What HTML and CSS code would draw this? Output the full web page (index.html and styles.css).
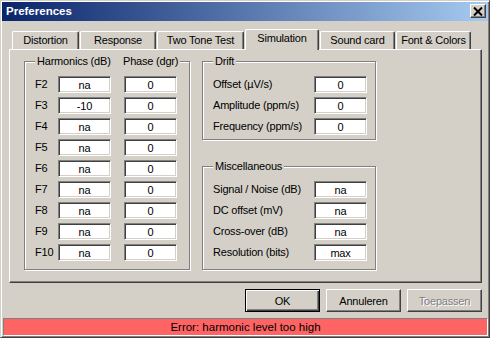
FILE: index.html
```html
<!DOCTYPE html>
<html lang="en">

<head>
    <meta charset="UTF-8">
    <title>Preferences</title>
    <link rel="stylesheet" href="styles.css">
</head>

<body>
    <div class="window">
        <div class="titlebar">
            <span class="title">Preferences</span>
            <button class="close-button" aria-label="Close">
                <svg width="10" height="9" viewBox="0 0 10 9">
                    <path d="M1 0.5 L9 8.5 M9 0.5 L1 8.5" stroke="#000" stroke-width="2" fill="none" />
                </svg>
            </button>
        </div>

        <div class="client">
            <div class="tabs">
                <div class="tab tab-distortion">Distortion</div>
                <div class="tab tab-response">Response</div>
                <div class="tab tab-twotone">Two Tone Test</div>
                <div class="tab tab-simulation active">Simulation</div>
                <div class="tab tab-soundcard">Sound card</div>
                <div class="tab tab-fonts">Font &amp; Colors</div>
            </div>

            <div class="panel">
                <fieldset class="group harmonics">
                    <legend><span class="legend-col">Harmonics (dB)</span><span class="legend-col-last">Phase (dgr)</span></legend>
                    <div class="harm-grid">
                        <span class="row-label">F2</span><input class="field" value="na"><input class="field" value="0">
                        <span class="row-label">F3</span><input class="field" value="-10"><input class="field" value="0">
                        <span class="row-label">F4</span><input class="field" value="na"><input class="field" value="0">
                        <span class="row-label">F5</span><input class="field" value="na"><input class="field" value="0">
                        <span class="row-label">F6</span><input class="field" value="na"><input class="field" value="0">
                        <span class="row-label">F7</span><input class="field" value="na"><input class="field" value="0">
                        <span class="row-label">F8</span><input class="field" value="na"><input class="field" value="0">
                        <span class="row-label">F9</span><input class="field" value="na"><input class="field" value="0">
                        <span class="row-label">F10</span><input class="field" value="na"><input class="field" value="0">
                    </div>
                </fieldset>

                <div class="side">
                    <fieldset class="group drift">
                        <legend>Drift</legend>
                        <div class="param-grid">
                            <span class="row-label">Offset (µV/s)</span><input class="field" value="0">
                            <span class="row-label">Amplitude (ppm/s)</span><input class="field" value="0">
                            <span class="row-label">Frequency (ppm/s)</span><input class="field" value="0">
                        </div>
                    </fieldset>

                    <fieldset class="group misc">
                        <legend>Miscellaneous</legend>
                        <div class="param-grid">
                            <span class="row-label">Signal / Noise (dB)</span><input class="field" value="na">
                            <span class="row-label">DC offset (mV)</span><input class="field" value="na">
                            <span class="row-label">Cross-over (dB)</span><input class="field" value="na">
                            <span class="row-label">Resolution (bits)</span><input class="field" value="max">
                        </div>
                    </fieldset>
                </div>
            </div>

            <div class="actions">
                <button class="btn default">OK</button>
                <button class="btn">Annuleren</button>
                <button class="btn" disabled>Toepassen</button>
            </div>
        </div>

        <div class="status">Error: harmonic level too high</div>
    </div>
</body>

</html>
```

FILE: styles.css
```css
:root {
    --face: #d4d0c8;
    --light: #ffffff;
    --shadow: #808080;
    --dark: #404040;
    --text: #000000;
}

* {
    margin: 0;
    padding: 0;
    box-sizing: border-box;
}

body {
    background: var(--face);
    font-family: "Liberation Sans", Arial, sans-serif;
    font-size: 11px;
    letter-spacing: -0.2px;
    color: var(--text);
}

.window {
    width: 490px;
    height: 338px;
    display: flex;
    flex-direction: column;
    background: var(--face);
    border: 1px solid;
    border-color: var(--face) var(--dark) var(--dark) var(--face);
    box-shadow: inset 1px 1px 0 var(--light), inset -1px -1px 0 var(--shadow);
    padding: 1px;
}

/* caption */

.titlebar {
    height: 19px;
    display: flex;
    align-items: flex-start;
    justify-content: space-between;
    background: linear-gradient(to right, #0a246a, #a6caf0);
    padding: 0 2px 0 4px;
}

.title {
    color: #fff;
    font-weight: bold;
    font-size: 11.5px;
    letter-spacing: 0;
    line-height: 19px;
}

.close-button {
    width: 16px;
    height: 14px;
    margin-top: 2px;
    display: flex;
    align-items: center;
    justify-content: center;
    background: var(--face);
    border: 1px solid;
    border-color: var(--light) var(--dark) var(--dark) var(--light);
    box-shadow: inset -1px -1px 0 var(--shadow);
}

/* tabs */

.client {
    padding: 8px 6px 0 7px;
}

.tabs {
    height: 20px;
    display: flex;
    align-items: flex-end;
    gap: 1px;
    padding-left: 3px;
}

.tab {
    height: 18px;
    line-height: 16px;
    text-align: center;
    background: var(--face);
    border-top: 1px solid var(--light);
    border-left: 1px solid var(--light);
    border-right: 1px solid var(--dark);
    border-top-left-radius: 2px;
    border-top-right-radius: 2px;
    box-shadow: inset -1px 0 0 var(--shadow);
}

.tab.active {
    height: 21px;
    margin-bottom: -1px;
    line-height: 17px;
    position: relative;
    z-index: 1;
}

.tab-distortion { width: 67px; }
.tab-response { width: 76px; }
.tab-twotone { width: 87px; }
.tab-simulation { width: 74px; }
.tab-soundcard { width: 75px; }
.tab-fonts { width: 75px; }

.panel {
    height: 234px;
    display: flex;
    align-items: flex-start;
    gap: 12px;
    padding: 5px 0 0 14px;
    border: 1px solid;
    border-color: var(--light) var(--dark) var(--dark) var(--light);
    box-shadow: inset -1px -1px 0 var(--shadow);
}

/* group boxes */

.group {
    min-width: 0;
    border: 1px solid var(--shadow);
    box-shadow: inset 1px 1px 0 var(--light), 1px 1px 0 var(--light);
}

.group legend {
    padding: 0 2px;
    line-height: 13px;
    white-space: nowrap;
    background: var(--face);
}

.harmonics {
    width: 166px;
    flex: none;
    padding: 8px 11px 8px 10px;
}

.harmonics legend {
    display: flex;
}

.legend-col {
    width: 86px;
    flex: none;
}

.legend-col-last {
    flex: none;
}

.harm-grid {
    display: grid;
    grid-template-columns: 23px 66px 53px;
    row-gap: 4px;
}

.side {
    display: flex;
    flex-direction: column;
    gap: 20px;
}

.drift,
.misc {
    width: 174px;
    padding: 8px 8px 4px 10px;
}

.misc {
    padding-bottom: 8px;
}

.param-grid {
    display: grid;
    grid-template-columns: 1fr 53px;
    row-gap: 4px;
}

.row-label {
    line-height: 17px;
    white-space: nowrap;
}

.field {
    width: 53px;
    height: 17px;
    font: inherit;
    letter-spacing: inherit;
    color: var(--text);
    text-align: center;
    background: #fff;
    border: 1px solid;
    border-color: var(--shadow) var(--light) var(--light) var(--shadow);
    box-shadow: inset 1px 1px 0 var(--dark), inset -1px -1px 0 var(--face);
    outline: none;
}

/* dialog buttons */

.actions {
    display: flex;
    justify-content: flex-end;
    gap: 6px;
    margin-top: 6px;
}

.btn {
    width: 75px;
    height: 23px;
    font: inherit;
    letter-spacing: inherit;
    color: var(--text);
    background: var(--face);
    border: 1px solid;
    border-color: var(--light) var(--dark) var(--dark) var(--light);
    box-shadow: inset -1px -1px 0 var(--shadow);
}

.btn.default {
    border-color: #000;
    box-shadow: inset 1px 1px 0 var(--light), inset -1px -1px 0 var(--dark), inset -2px -2px 0 var(--shadow);
}

.btn:disabled {
    color: var(--shadow);
    text-shadow: 1px 1px 0 var(--light);
}

/* status line */

.status {
    height: 18px;
    margin: 6px 0 0 1px;
    line-height: 16px;
    text-align: center;
    font-size: 11.5px;
    letter-spacing: 0;
    background: #ff6464;
    border: 1px solid;
    border-color: var(--shadow) var(--light) var(--light) var(--shadow);
}
```
